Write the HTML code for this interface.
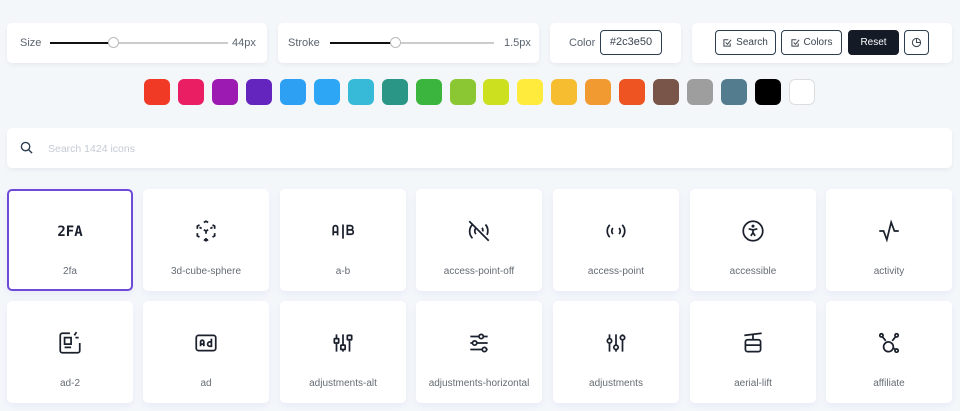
<!DOCTYPE html>
<html><head><meta charset="utf-8"><style>
*{box-sizing:border-box;margin:0;padding:0}
body{width:960px;height:411px;overflow:hidden;background:#f4f7fa;font-family:"Liberation Sans",sans-serif;position:relative;color:#2c3e50}
.p{position:absolute;background:#fff;border-radius:5px;box-shadow:0 2px 5px rgba(30,40,90,.06)}
.lbl{position:absolute;font-size:11px;color:#5a6470;top:14px}
.track{position:absolute;height:2px;background:#ccc;top:19px}
.fill{position:absolute;height:2px;background:#111;top:19px}
.knob{position:absolute;width:11px;height:11px;border-radius:50%;background:#fff;border:1px solid #bbb;top:14px}
.btn{position:absolute;top:7px;height:25px;border:1px solid #2c3e50;border-radius:4px;font-size:10px;line-height:23px;display:flex;align-items:center;justify-content:center;gap:4px;color:#3a4450;background:#fff}
.sw{position:absolute;top:79px;width:26px;height:26px;border-radius:6px}
.card{position:absolute;width:126px;height:102px;background:#fff;border-radius:5px;box-shadow:0 3px 8px rgba(90,80,200,.07)}
.card svg{position:absolute;left:50px;top:29px}
.card span{position:absolute;left:0;right:0;top:77px;text-align:center;font-size:10px;color:#666c74}
.sel{border:2px solid #6e4ad6}
.sel svg{left:48px;top:27px}.sel span{top:75px}
</style></head><body>
<div class="p" style="left:7px;top:23px;width:260px;height:40px">
<div class="lbl" style="left:13px">Size</div>
<div class="track" style="left:43px;width:178px"></div><div class="fill" style="left:43px;width:65px"></div><div class="knob" style="left:101px"></div>
<div class="lbl" style="left:225px">44px</div></div>
<div class="p" style="left:278px;top:23px;width:261px;height:40px">
<div class="lbl" style="left:10px">Stroke</div>
<div class="track" style="left:52px;width:164px"></div><div class="fill" style="left:52px;width:64px"></div><div class="knob" style="left:112px"></div>
<div class="lbl" style="left:226px">1.5px</div></div>
<div class="p" style="left:550px;top:23px;width:131px;height:40px">
<div class="lbl" style="left:19px">Color</div>
<div class="btn" style="left:50px;width:62px;font-size:11px">#2c3e50</div></div>
<div class="p" style="left:692px;top:23px;width:260px;height:40px">
<div class="btn" style="left:23px;width:61px"><svg width="9" height="9" viewBox="0 0 10 10" fill="none" stroke="#3a4450" stroke-width="1.1"><path d="M3 5l2 2 4-5M8 6v3H1V2h5"/></svg>Search</div>
<div class="btn" style="left:89px;width:61px"><svg width="9" height="9" viewBox="0 0 10 10" fill="none" stroke="#3a4450" stroke-width="1.1"><path d="M3 5l2 2 4-5M8 6v3H1V2h5"/></svg>Colors</div>
<div class="btn" style="left:156px;width:51px;background:#141b26;border-color:#141b26;color:#fff">Reset</div>
<div class="btn" style="left:212px;width:25px"><svg width="11" height="11" viewBox="0 0 12 12" fill="none" stroke="#3a4450" stroke-width="1.1"><circle cx="6" cy="6" r="4.5"/><path d="M6 1.5V6h4.5"/></svg></div></div>
<div class="sw" style="left:144px;background:#f03a25"></div><div class="sw" style="left:178px;background:#ea1e63"></div><div class="sw" style="left:212px;background:#9c1ab1"></div><div class="sw" style="left:246px;background:#6424be"></div><div class="sw" style="left:280px;background:#2ea0f3"></div><div class="sw" style="left:314px;background:#2ea6f6"></div><div class="sw" style="left:348px;background:#36bad8"></div><div class="sw" style="left:382px;background:#2a9685"></div><div class="sw" style="left:416px;background:#3bb53e"></div><div class="sw" style="left:450px;background:#8bc633"></div><div class="sw" style="left:483px;background:#cde020"></div><div class="sw" style="left:517px;background:#feeb3b"></div><div class="sw" style="left:551px;background:#f6bd30"></div><div class="sw" style="left:585px;background:#f29a32"></div><div class="sw" style="left:619px;background:#ee5322"></div><div class="sw" style="left:653px;background:#785548"></div><div class="sw" style="left:687px;background:#9e9e9e"></div><div class="sw" style="left:721px;background:#537d8f"></div><div class="sw" style="left:755px;background:#000"></div><div class="sw" style="left:789px;background:#fff;border:1px solid #ddd"></div>
<div class="p" style="left:7px;top:128px;width:945px;height:40px">
<svg style="position:absolute;left:13px;top:13px" width="13" height="13" viewBox="0 0 14 14" fill="none" stroke="#2c3e50" stroke-width="1.5"><circle cx="6" cy="6" r="4.5"/><path d="M9.5 9.5L13 13"/></svg>
<div style="position:absolute;left:41px;top:15px;font-size:10.5px;color:#c5cad3">Search 1424 icons</div></div>

<div class="card sel" style="left:7px;top:189px"><svg width="30" height="26" viewBox="0 0 30 26" style="left:46px"><text x="15" y="18" text-anchor="middle" font-family="DejaVu Sans Mono,monospace" font-size="14" font-weight="bold" fill="#1a202c">2FA</text></svg><span>2fa</span></div>
<div class="card" style="left:143px;top:189px"><svg width="26" height="26" viewBox="0 0 24 24" fill="none" stroke="#1a202c" stroke-width="1.6"><path d="M6 17.6l-2-1.1V14M4 10V7.5l2-1.1M10 4.1L12 3l2 1.1M18 6.4l2 1.1V10M20 14v2.5l-2 1.1M14 19.9L12 21l-2-1.1M12 12l2-1.1M18 8.6l-2 1.1M12 12v2.5M12 18.5V21M12 12l-2-1.1M6 8.6l2 1.1"/></svg><span>3d-cube-sphere</span></div>
<div class="card" style="left:280px;top:189px"><svg width="26" height="26" viewBox="0 0 24 24" fill="none" stroke="#1a202c" stroke-width="1.6"><path d="M3 16V9a2 2 0 0 1 4 0v7M3 13h4M12 6v13M16 7h3a2 2 0 0 1 0 4h-3zM16 11h3.5a2 2 0 0 1 0 4H16zM16 7v8"/></svg><span>a-b</span></div>
<div class="card" style="left:416px;top:189px"><svg width="26" height="26" viewBox="0 0 24 24" fill="none" stroke="#1a202c" stroke-width="1.6"><path d="M3 3l18 18M14.8 9a4 4 0 0 1 .6 3.4M18 6a9 9 0 0 1 1.4 9.6M9.2 9.2A4 4 0 0 0 9.2 14.8M6 6a9 9 0 0 0 0 12.7"/></svg><span>access-point-off</span></div>
<div class="card" style="left:553px;top:189px"><svg width="26" height="26" viewBox="0 0 24 24" fill="none" stroke="#1a202c" stroke-width="1.6"><path d="M12 12v.01M14.8 9.2a4 4 0 0 1 0 5.6M17.7 6.3a8 8 0 0 1 0 11.4M9.2 14.8a4 4 0 0 1 0-5.6M6.3 17.7a8 8 0 0 1 0-11.4"/></svg><span>access-point</span></div>
<div class="card" style="left:690px;top:189px"><svg width="26" height="26" viewBox="0 0 24 24" fill="none" stroke="#1a202c" stroke-width="1.6"><circle cx="12" cy="12" r="9"/><path d="M10 16.5l2-3 2 3M12 13.5V11l-4-1M12 11l4-1"/><circle cx="12" cy="7.5" r=".6" fill="#1a202c"/></svg><span>accessible</span></div>
<div class="card" style="left:826px;top:189px"><svg width="26" height="26" viewBox="0 0 24 24" fill="none" stroke="#1a202c" stroke-width="1.6"><path d="M3 12h4l3 8 4-16 3 8h4"/></svg><span>activity</span></div>

<div class="card" style="left:7px;top:301px"><svg width="26" height="26" viewBox="0 0 24 24" fill="none" stroke="#1a202c" stroke-width="1.6"><path d="M11.9 3H5a2 2 0 0 0-2 2v14a2 2 0 0 0 2 2h14a2 2 0 0 0 2-2v-7"/><path d="M7 7h6v6H7zM7 16h6M17 7h3M16 5l2-3"/></svg><span>ad-2</span></div>
<div class="card" style="left:143px;top:301px"><svg width="26" height="26" viewBox="0 0 24 24" fill="none" stroke="#1a202c" stroke-width="1.6"><rect x="3" y="5" width="18" height="14" rx="2"/><path d="M7 15v-4a1.5 1.5 0 0 1 3 0v4M7 13h3M17 8v7h-1.5a1.5 1.5 0 0 1 0-4H17"/></svg><span>ad</span></div>
<div class="card" style="left:280px;top:301px"><svg width="26" height="26" viewBox="0 0 24 24" fill="none" stroke="#1a202c" stroke-width="1.6"><rect x="4" y="8" width="4" height="4" rx=".5"/><path d="M6 4v4M6 12v8"/><rect x="10" y="14" width="4" height="4" rx=".5"/><path d="M12 4v10M12 18v2"/><rect x="16" y="5" width="4" height="4" rx=".5"/><path d="M18 4v1M18 9v11"/></svg><span>adjustments-alt</span></div>
<div class="card" style="left:416px;top:301px"><svg width="26" height="26" viewBox="0 0 24 24" fill="none" stroke="#1a202c" stroke-width="1.6"><circle cx="14" cy="6" r="2"/><path d="M4 6h8M16 6h4"/><circle cx="8" cy="12" r="2"/><path d="M4 12h2M10 12h10"/><circle cx="17" cy="18" r="2"/><path d="M4 18h11M19 18h1"/></svg><span>adjustments-horizontal</span></div>
<div class="card" style="left:553px;top:301px"><svg width="26" height="26" viewBox="0 0 24 24" fill="none" stroke="#1a202c" stroke-width="1.6"><circle cx="6" cy="10" r="2"/><path d="M6 4v4M6 12v8"/><circle cx="12" cy="16" r="2"/><path d="M12 4v10M12 18v2"/><circle cx="18" cy="7" r="2"/><path d="M18 4v1M18 9v11"/></svg><span>adjustments</span></div>
<div class="card" style="left:690px;top:301px"><svg width="26" height="26" viewBox="0 0 24 24" fill="none" stroke="#1a202c" stroke-width="1.6"><path d="M4 5l16-2M12 4v5M7 9h10a2 2 0 0 1 2 2v7a2 2 0 0 1-2 2H7a2 2 0 0 1-2-2v-7a2 2 0 0 1 2-2zM5 14h14"/></svg><span>aerial-lift</span></div>
<div class="card" style="left:826px;top:301px"><svg width="26" height="26" viewBox="0 0 24 24" fill="none" stroke="#1a202c" stroke-width="1.6"><path d="M5.9 6.2L9 10M15 10l3.1-3.8M15.5 16.5l2.5 1.5"/><circle cx="5" cy="5" r="1.5"/><circle cx="19" cy="5" r="1.5"/><circle cx="19" cy="19" r="1.5"/><circle cx="11.5" cy="15.5" r="4.5"/></svg><span>affiliate</span></div>
</body></html>
